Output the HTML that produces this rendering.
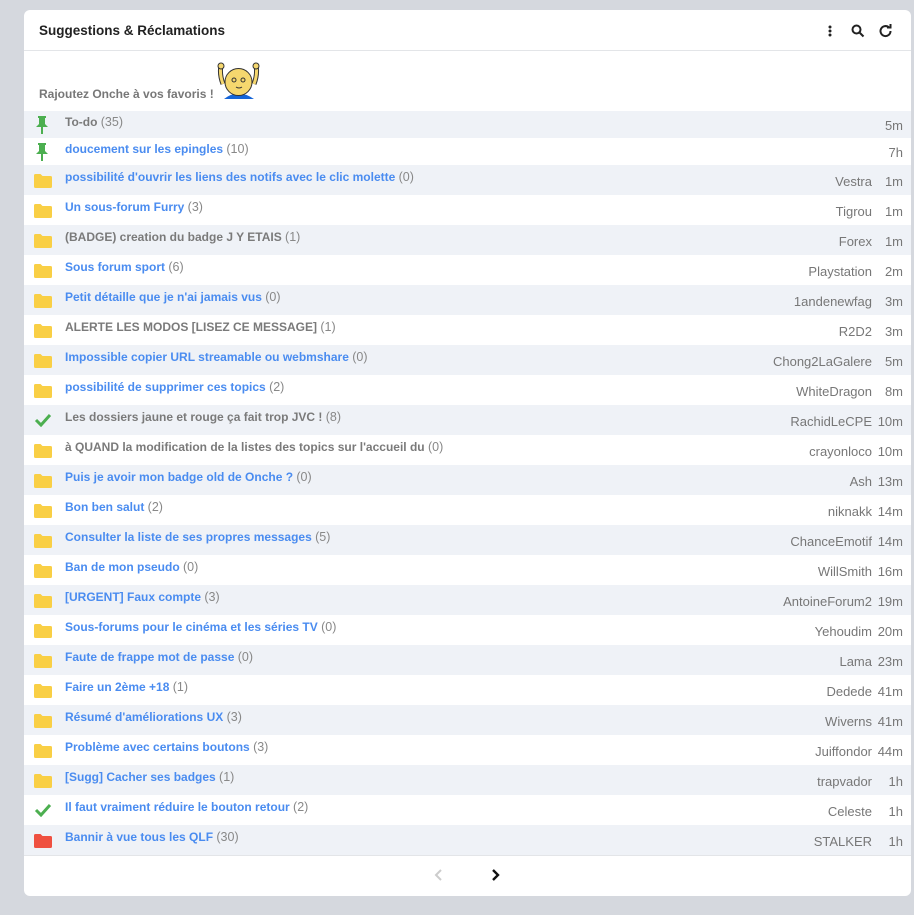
<!DOCTYPE html>
<html><head><meta charset="utf-8"><style>
*{margin:0;padding:0;box-sizing:border-box}
body{width:914px;height:915px;background:#d5d8de;font-family:"Liberation Sans",sans-serif;overflow:hidden;position:relative}
.card{position:absolute;left:24px;top:10px;width:887px;height:886px;background:#fff;border-radius:6px;overflow:hidden}
.hd{height:41px;border-bottom:1px solid #e3e5e8;position:relative}
.hd h1{position:absolute;left:15px;top:13px;font-size:13.5px;font-weight:bold;color:#222}
.intro{position:absolute;left:15px;top:77px;font-size:12px;font-weight:bold;color:#777}
.row{position:absolute;left:0;width:887px;height:30px}
.row.s{background:#eff2f7}
.t{position:absolute;left:41px;top:5px;font-size:12px;font-weight:bold;color:#4a8cf0;white-space:nowrap}
.t.g{color:#7a7a7a}
.t span{font-weight:normal;color:#888;font-size:12.5px}
.a{position:absolute;right:39px;top:9px;font-size:13px;color:#777;text-align:right}
.tm{position:absolute;right:8px;top:9px;font-size:13px;color:#777}
.ic{position:absolute;left:10px;top:9px}
</style></head><body>
<div class="card">
<div class="hd"><h1>Suggestions &amp; Réclamations</h1>
<svg style="position:absolute;left:803px;top:15px" width="6" height="12"><circle cx="3" cy="2" r="1.5" fill="#222"/><circle cx="3" cy="6" r="1.5" fill="#222"/><circle cx="3" cy="10" r="1.5" fill="#222"/></svg>
<svg style="position:absolute;left:827px;top:14px" width="14" height="14" fill="none" stroke="#222" stroke-width="2"><circle cx="5.5" cy="5.5" r="4"/><path d="M8.5 8.5L12.5 12.5"/></svg>
<svg style="position:absolute;left:855px;top:14px" width="14" height="14" fill="none" stroke="#222" stroke-width="2"><path d="M11.5 7A5 5 0 1 1 10 3.5"/><path d="M8 3.5h3.5V0" /></svg>
</div>
<div class="intro">Rajoutez Onche à vos favoris !</div>
<svg style="position:absolute;left:193px;top:52px" width="44" height="37"><path d="M6 22 C3 14 3 8 4 3 M37 22 C40 14 40 8 39 3" stroke="#333" stroke-width="5" fill="none"/><path d="M6 22 C3 14 3 8 4 3 M37 22 C40 14 40 8 39 3" stroke="#f5d76e" stroke-width="3" fill="none"/><circle cx="4" cy="4" r="3" fill="#f5d76e" stroke="#333"/><circle cx="39" cy="4" r="3" fill="#f5d76e" stroke="#333"/><path d="M7 37 Q21 26 37 37Z" fill="#1565d8"/><circle cx="21.5" cy="20" r="13.5" fill="#f5d76e" stroke="#333" stroke-width="1"/><circle cx="17" cy="18" r="2" fill="none" stroke="#333"/><circle cx="26" cy="18" r="2" fill="none" stroke="#333"/><path d="M19 25q3 2 6 0" stroke="#333" fill="none"/></svg>
<div id="rows"></div>
<svg style="position:absolute;left:409px;top:858px" width="10" height="14" fill="none" stroke="#ccc" stroke-width="2"><path d="M8 2L3 7l5 5"/></svg>
<svg style="position:absolute;left:467px;top:858px" width="10" height="14" fill="none" stroke="#111" stroke-width="2.4"><path d="M2 2l5 5-5 5"/></svg>
</div>
<script>
const F='<svg class="ic" width="18" height="14"><path d="M0 1.5a1.5 1.5 0 0 1 1.5-1.5h5l2 2h8a1.5 1.5 0 0 1 1.5 1.5v9a1.5 1.5 0 0 1-1.5 1.5h-15A1.5 1.5 0 0 1 0 12.5z" fill="C"/></svg>';
const fold=c=>F.replace('C',c);
const pin='<svg class="ic" style="left:12px;top:5px" width="12" height="18"><path d="M2 0h8v2h-1v6l3 3H0l3-3V2H2z" fill="#4caf50"/><rect x="5" y="11" width="2" height="7" fill="#4caf50"/></svg>';
const chk='<svg class="ic" style="top:8px" width="18" height="14" fill="none" stroke="#4caf50" stroke-width="3"><path d="M2 7l5 5 9-10"/></svg>';
const d=[
[pin,'To-do','35','','5m',1,27],
[pin,'doucement sur les epingles','10','','7h',0,27],
['Y',"possibilité d'ouvrir les liens des notifs avec le clic molette",'0','Vestra','1m',0],
['Y','Un sous-forum Furry','3','Tigrou','1m',0],
['Y','(BADGE) creation du badge J Y ETAIS','1','Forex','1m',1],
['Y','Sous forum sport','6','Playstation','2m',0],
['Y',"Petit détaille que je n'ai jamais vus",'0','1andenewfag','3m',0],
['Y','ALERTE LES MODOS [LISEZ CE MESSAGE]','1','R2D2','3m',1],
['Y','Impossible copier URL streamable ou webmshare','0','Chong2LaGalere','5m',0],
['Y','possibilité de supprimer ces topics','2','WhiteDragon','8m',0],
[chk,'Les dossiers jaune et rouge ça fait trop JVC !','8','RachidLeCPE','10m',1],
['Y',"à QUAND la modification de la listes des topics sur l'accueil du",'0','crayonloco','10m',1],
['Y','Puis je avoir mon badge old de Onche ?','0','Ash','13m',0],
['Y','Bon ben salut','2','niknakk','14m',0],
['Y','Consulter la liste de ses propres messages','5','ChanceEmotif','14m',0],
['Y','Ban de mon pseudo','0','WillSmith','16m',0],
['Y','[URGENT] Faux compte','3','AntoineForum2','19m',0],
['Y','Sous-forums pour le cinéma et les séries TV','0','Yehoudim','20m',0],
['Y','Faute de frappe mot de passe','0','Lama','23m',0],
['Y','Faire un 2ème +18','1','Dedede','41m',0],
['Y',"Résumé d'améliorations UX",'3','Wiverns','41m',0],
['Y','Problème avec certains boutons','3','Juiffondor','44m',0],
['Y','[Sugg] Cacher ses badges','1','trapvador','1h',0],
[chk,'Il faut vraiment réduire le bouton retour','2','Celeste','1h',0],
['R','Bannir à vue tous les QLF','30','STALKER','1h',0]];
let y=101,h='';
d.forEach((r,i)=>{const ht=r[6]||30;let ic=r[0]=='Y'?fold('#f9cf45'):r[0]=='R'?fold('#ef5040'):r[0];
const top=ht==27?4:5;
h+=`<div class="row${i%2==0?' s':''}" style="top:${y}px;height:${ht}px">${ic}<div class="t${r[5]?' g':''}" style="top:${top}px">${r[1]} <span>(${r[2]})</span></div><div class="a">${r[3]}</div><div class="tm" style="top:${ht==27?7:9}px">${r[4]}</div></div>`;y+=ht;});
h+=`<div style="position:absolute;left:0;top:${y}px;width:887px;border-top:1px solid #e3e5e8"></div>`;
document.getElementById('rows').innerHTML=h;
</script>
</body></html>
